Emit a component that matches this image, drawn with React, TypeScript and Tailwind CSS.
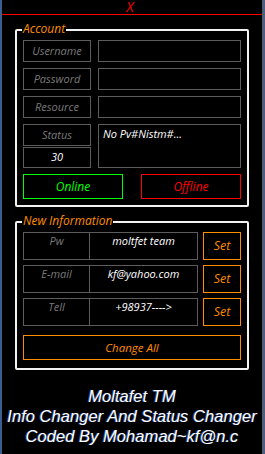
import React from "react";

const ui = { fontFamily: '"Open Sans", "Noto Sans", sans-serif' };
const foot = { fontFamily: '"Liberation Sans", Arial, sans-serif' };

function LabelBox({ text, className = "" }: { text: string; className?: string }) {
  return (
    <div className={`flex items-center justify-center border border-[#5c5c5c] text-[11px] italic text-[#7a7a7a] ${className}`}>
      {text}
    </div>
  );
}

function InfoRow({ label, value }: { label: string; value: string }) {
  return (
    <div className="flex gap-[5px]">
      <div className="flex h-[28px] w-[175px] border border-[#5c5c5c]">
        <div className="w-[66px] border-r border-[#5c5c5c] pt-[1px] text-center text-[11px] italic leading-[14px] text-[#7a7a7a]">
          {label}
        </div>
        <div className="flex-1 pt-[1px] text-center text-[11px] italic leading-[14px] text-white">{value}</div>
      </div>
      <div className="flex h-[28px] w-[38px] items-center justify-center border border-[#ff8c00] text-[12.5px] italic text-[#ff8c00]">
        Set
      </div>
    </div>
  );
}

export default function App() {
  return (
    <div className="flex h-[454px] w-[265px] overflow-hidden bg-black" style={ui}>
      <div className="w-[2px] bg-[#3c5f8f]" />
      <div className="flex flex-1 flex-col">
        <div className="flex h-[14px] items-start justify-center pr-[4px]">
          <span className="text-[14px] italic leading-[14px] text-[#ff0000]">X</span>
        </div>
        <div className="h-[1px] bg-[#ff0000]" />

        {/* Account */}
        <div className="relative ml-[13px] mr-[13px] mt-[14px] rounded-[2px] border-2 border-[#f2f2f2] px-[6px] pb-[6px] pt-[9px]">
          <div className="absolute left-[5px] top-[-9px] bg-black px-[1px] text-[12px] italic leading-[14px] text-[#ff8c00]">
            Account
          </div>
          <div className="flex flex-col gap-[6px]">
            {["Username", "Password", "Resource"].map((t) => (
              <div key={t} className="flex gap-[7px]">
                <LabelBox text={t} className="h-[22px] w-[68px]" />
                <div className="h-[22px] flex-1 border border-[#5c5c5c]" />
              </div>
            ))}
            <div className="flex gap-[7px]">
              <div className="flex w-[68px] flex-col gap-[1px]">
                <LabelBox text="Status" className="h-[22px]" />
                <div className="flex h-[21px] items-center justify-center border border-[#5c5c5c] text-[11px] italic text-white">
                  30
                </div>
              </div>
              <div className="h-[44px] flex-1 border border-[#5c5c5c] px-[4px] pt-[2px] text-[11px] italic leading-[14px] text-white">
                No Pv#Nistm#...
              </div>
            </div>
            <div className="flex justify-between">
              <div className="flex h-[25px] w-[100px] items-center justify-center border border-[#00ff00] text-[12px] italic text-[#00ff00]">
                Online
              </div>
              <div className="flex h-[25px] w-[100px] items-center justify-center border border-[#ff0000] text-[12px] italic text-[#ff0000]">
                Offline
              </div>
            </div>
          </div>
        </div>

        {/* New Information */}
        <div className="relative ml-[13px] mr-[13px] mt-[14px] rounded-[2px] border-2 border-[#f2f2f2] px-[6px] pb-[8px] pt-[9px]">
          <div className="absolute left-[5px] top-[-9px] bg-black px-[1px] text-[12px] italic leading-[14px] text-[#ff8c00]">
            New Information
          </div>
          <div className="flex flex-col gap-[5px]">
            <InfoRow label="Pw" value="moltfet team" />
            <InfoRow label="E-mail" value="kf@yahoo.com" />
            <InfoRow label="Tell" value="+98937---->" />
          </div>
          <div className="mt-[9px] flex h-[25px] items-center justify-center border border-[#ff8c00] text-[11.5px] italic text-[#ff8c00]">
            Change All
          </div>
        </div>

        <div
          className="mt-[17px] flex flex-col items-center text-[16.6px] italic leading-[20px] text-white [text-shadow:-1px_0_0_rgba(70,130,255,0.6)]"
          style={foot}
        >
          <div>Moltafet TM</div>
          <div className="whitespace-nowrap">Info Changer And Status Changer</div>
          <div>Coded By Mohamad~kf@n.c</div>
        </div>
      </div>
      <div className="w-[3px] bg-[#4a5f7a]" />
    </div>
  );
}
